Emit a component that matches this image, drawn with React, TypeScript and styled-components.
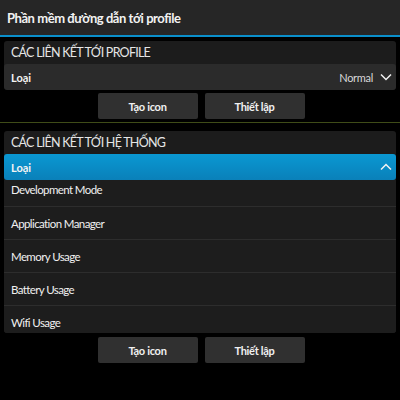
import React from 'react';
import styled, { createGlobalStyle } from 'styled-components';

const GlobalStyle = createGlobalStyle`
  html, body {
    margin: 0;
    padding: 0;
    background: #000000;
  }
  body {
    font-family: Lato, "Open Sans", sans-serif;
    color: #ececec;
  }
`;

const Screen = styled.div`
  width: 400px;
  height: 400px;
  background: #000000;
  overflow: hidden;
`;

const TitleBar = styled.div`
  height: 35px;
  display: flex;
  align-items: center;
  padding-left: 7px;
  background: #262626;
  border-bottom: 2px solid #0a8fcb;
  font-size: 13px;
  font-weight: 700;
  letter-spacing: -0.45px;
  color: #f2f2f2;
`;

const Content = styled.div`
  padding: 4px 4px 0;
  display: flex;
  flex-direction: column;
`;

const Panel = styled.div<{ $gap?: number }>`
  margin-top: ${({ $gap }) => $gap ?? 0}px;
  background: #1c1c1c;
  border-radius: 3px;
  overflow: hidden;
`;

const PanelHeader = styled.div`
  height: 23px;
  display: flex;
  align-items: center;
  padding-left: 7px;
  font-size: 12.5px;
  letter-spacing: -0.75px;
  text-transform: uppercase;
  color: #e6e6e6;
`;

const DropRow = styled.div<{ $open?: boolean }>`
  height: 26px;
  display: flex;
  align-items: center;
  justify-content: space-between;
  padding: 0 4px 0 7px;
  border-radius: 3px;
  background: ${({ $open }) => ($open
    ? 'linear-gradient(#0a98d2, #0a80b9)'
    : '#2b2b2b')};
  font-size: 11px;
  font-weight: 700;
  color: #f4f4f4;
`;

const DropValue = styled.div`
  display: flex;
  align-items: center;
  gap: 7px;
  font-weight: 400;
  letter-spacing: -0.3px;
  color: #d8d8d8;
`;

const ButtonRow = styled.div<{ $top: number }>`
  margin-top: ${({ $top }) => $top}px;
  display: flex;
  justify-content: center;
  gap: 7px;
  padding-left: 2px;
`;

const Button = styled.div`
  width: 100px;
  height: 26px;
  display: flex;
  align-items: center;
  justify-content: center;
  background: #303030;
  border-radius: 2px;
  font-size: 11px;
  font-weight: 700;
  letter-spacing: -0.3px;
  color: #f0f0f0;
`;

const Divider = styled.div`
  margin: 3px -4px 0;
  height: 1px;
  background: #3f4c18;
`;

const List = styled.div`
  height: 153px;
  overflow: hidden;
`;

const Item = styled.div`
  height: 33px;
  box-sizing: border-box;
  display: flex;
  align-items: center;
  padding-left: 7px;
  border-top: 1px solid #2d2d2d;
  background: #1d1d1d;
  font-size: 11.5px;
  letter-spacing: -0.6px;
  color: #f0f0f0;

  &:first-child {
    margin-top: -7px;
    border-top: none;
  }
`;

function Chevron({ up }: { up?: boolean }) {
  return (
    <svg width="12" height="8" viewBox="0 0 12 8">
      <polyline
        points={up ? '1,6.5 6,1.5 11,6.5' : '1,1.5 6,6.5 11,1.5'}
        fill="none"
        stroke="#f2f2f2"
        strokeWidth="1.5"
      />
    </svg>
  );
}

const systemLinks = [
  'Development Mode',
  'Application Manager',
  'Memory Usage',
  'Battery Usage',
  'Wifi Usage',
];

function Actions({ top }: { top: number }) {
  return (
    <ButtonRow $top={top}>
      <Button>Tạo icon</Button>
      <Button>Thiết lập</Button>
    </ButtonRow>
  );
}

export default function App() {
  return (
    <Screen>
      <GlobalStyle />
      <TitleBar>Phần mềm đường dẫn tới profile</TitleBar>
      <Content>
        <Panel>
          <PanelHeader>Các liên kết tới profile</PanelHeader>
          <DropRow>
            <span>Loại</span>
            <DropValue>
              Normal
              <Chevron />
            </DropValue>
          </DropRow>
        </Panel>
        <Actions top={3} />
        <Divider />
        <Panel $gap={8}>
          <PanelHeader>Các liên kết tới hệ thống</PanelHeader>
          <DropRow $open>
            <span>Loại</span>
            <Chevron up />
          </DropRow>
          <List>
            {systemLinks.map((name) => (
              <Item key={name}>{name}</Item>
            ))}
          </List>
        </Panel>
        <Actions top={4} />
      </Content>
    </Screen>
  );
}
